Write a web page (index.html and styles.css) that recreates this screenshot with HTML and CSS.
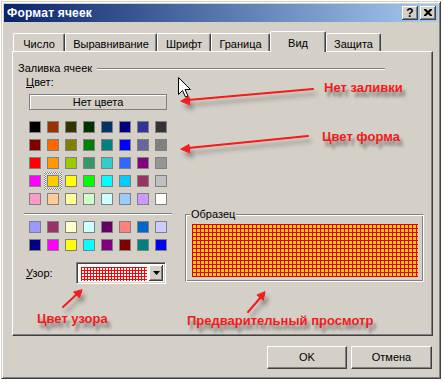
FILE: index.html
```html
<!DOCTYPE html>
<html lang="ru">
<head>
<meta charset="utf-8">
<title>Формат ячеек</title>
<link rel="stylesheet" href="styles.css">
</head>
<body>
<div class="stage">
  <div class="dialog">
    <div class="titlebar">
      <span class="title">Формат ячеек</span>
      <span class="tbtn help">?</span>
      <span class="tbtn close">
        <svg width="8" height="7" viewBox="0 0 8 7"><path d="M0 0h2l2 2 2-2h2v1L5.5 3.5 8 6v1H6L4 5 2 7H0V6l2.5-2.5L0 1z" fill="#000"/></svg>
      </span>
    </div>
    <div class="client">
      <div class="tabs">
        <div class="tab w1">Число</div>
        <div class="tab w2">Выравнивание</div>
        <div class="tab w3">Шрифт</div>
        <div class="tab w4">Граница</div>
        <div class="tab w5 active">Вид</div>
        <div class="tab w6">Защита</div>
      </div>
      <div class="panel">
        <div class="grouphead"><span class="gtext">Заливка ячеек</span><span class="etch grow"></span></div>
        <div class="panel-body">
          <div class="leftcol">
            <div class="lbl"><u>Ц</u>вет:</div>
            <div class="nocolor">Нет цвета</div>
            <div class="swatches">
              <span class="sw" style="background:#000000"></span><span class="sw" style="background:#993300"></span><span class="sw" style="background:#333300"></span><span class="sw" style="background:#003300"></span><span class="sw" style="background:#003366"></span><span class="sw" style="background:#000080"></span><span class="sw" style="background:#333399"></span><span class="sw" style="background:#333333"></span>
              <span class="sw" style="background:#800000"></span><span class="sw" style="background:#FF6600"></span><span class="sw" style="background:#808000"></span><span class="sw" style="background:#008000"></span><span class="sw" style="background:#008080"></span><span class="sw" style="background:#0000FF"></span><span class="sw" style="background:#666699"></span><span class="sw" style="background:#808080"></span>
              <span class="sw" style="background:#FF0000"></span><span class="sw" style="background:#FF9900"></span><span class="sw" style="background:#99CC00"></span><span class="sw" style="background:#339966"></span><span class="sw" style="background:#33CCCC"></span><span class="sw" style="background:#3366FF"></span><span class="sw" style="background:#800080"></span><span class="sw" style="background:#969696"></span>
              <span class="sw" style="background:#FF00FF"></span><span class="sw selected" style="background:#FFCC00"></span><span class="sw" style="background:#FFFF00"></span><span class="sw" style="background:#00FF00"></span><span class="sw" style="background:#00FFFF"></span><span class="sw" style="background:#00CCFF"></span><span class="sw" style="background:#993366"></span><span class="sw" style="background:#C0C0C0"></span>
              <span class="sw" style="background:#FF99CC"></span><span class="sw" style="background:#FFCC99"></span><span class="sw" style="background:#FFFF99"></span><span class="sw" style="background:#CCFFCC"></span><span class="sw" style="background:#CCFFFF"></span><span class="sw" style="background:#99CCFF"></span><span class="sw" style="background:#CC99FF"></span><span class="sw" style="background:#FFFFFF"></span>
            </div>
            <div class="etch sep"></div>
            <div class="swatches second">
              <span class="sw" style="background:#9999FF"></span><span class="sw" style="background:#993366"></span><span class="sw" style="background:#FFFFCC"></span><span class="sw" style="background:#CCFFFF"></span><span class="sw" style="background:#660066"></span><span class="sw" style="background:#FF8080"></span><span class="sw" style="background:#0066CC"></span><span class="sw" style="background:#CCCCFF"></span>
              <span class="sw" style="background:#000080"></span><span class="sw" style="background:#FF00FF"></span><span class="sw" style="background:#FFFF00"></span><span class="sw" style="background:#00FFFF"></span><span class="sw" style="background:#800080"></span><span class="sw" style="background:#800000"></span><span class="sw" style="background:#008080"></span><span class="sw" style="background:#0000FF"></span>
            </div>
            <div class="pattern-row">
              <span class="lbl plabel"><u>У</u>зор:</span>
              <div class="combo">
                <div class="combo-field"><span class="combo-pattern"></span></div>
                <span class="combo-btn"><svg width="7" height="4" viewBox="0 0 7 4"><path d="M0 0h7L3.5 4z" fill="#000"/></svg></span>
              </div>
            </div>
          </div>
          <div class="sample">
            <span class="legend">Образец</span>
            <div class="preview"></div>
          </div>
        </div>
      </div>
      <div class="buttons">
        <div class="btn">OK</div>
        <div class="btn">Отмена</div>
      </div>
    </div>
  </div>

  <svg class="arrows" width="445" height="382" viewBox="0 0 445 382">
    <defs>
      <filter id="shadow" x="-20%" y="-50%" width="140%" height="200%">
        <feDropShadow dx="3" dy="5" stdDeviation="2" flood-color="#303030" flood-opacity="0.45"/>
      </filter>
    </defs>
    <g filter="url(#shadow)" stroke="#f51a1a" stroke-width="2" fill="#f51a1a" stroke-linecap="round">
      <line x1="313" y1="89" x2="188" y2="100"/>
      <path d="M181 101 L189 96.5 L189.8 104.5 Z" stroke-width="1"/>
      <line x1="308" y1="136" x2="188" y2="148"/>
      <path d="M181 149 L189 144.5 L189.8 152.5 Z" stroke-width="1"/>
      <line x1="63" y1="307" x2="77" y2="294"/>
      <path d="M82 290 L79.5 298 L73.8 292.2 Z" stroke-width="1"/>
      <line x1="248" y1="312" x2="261" y2="297"/>
      <path d="M265 292 L263.3 300.3 L257.2 295.2 Z" stroke-width="1"/>
    </g>
  </svg>
  <span class="note n1">Нет заливки</span>
  <span class="note n2">Цвет форма</span>
  <span class="note n3">Цвет узора</span>
  <span class="note n4">Предварительный просмотр</span>
  <svg class="cursor" width="13" height="21" viewBox="0 0 13 21"><path d="M0.5 0.5V17.5L4.5 13.5L7.5 20L10 19L7 12.5H12.5Z" fill="#fff" stroke="#000" stroke-width="1" stroke-linejoin="miter"/></svg>
</div>
</body>
</html>
```

FILE: styles.css
```css
* { box-sizing: border-box; }
html, body { margin: 0; padding: 0; }
body {
  width: 445px;
  height: 382px;
  overflow: hidden;
  background: #fff;
  font-family: "Liberation Sans", Arial, sans-serif;
  font-size: 11px;
  color: #000;
}
.stage {
  position: relative;
  width: 445px;
  height: 382px;
  padding: 1px 0 0 1px;
}
.dialog {
  width: 440px;
  height: 378px;
  background: #d4d0c8;
  border: 1px solid;
  border-color: #d4d0c8 #404040 #404040 #d4d0c8;
  box-shadow: inset 1px 1px #fff, inset -1px -1px #808080;
  padding: 2px;
  display: flex;
  flex-direction: column;
}
.titlebar {
  height: 18px;
  flex: none;
  background: linear-gradient(to right, #0a246a, #a6caf0);
  display: flex;
  align-items: center;
  padding: 0 2px 0 3px;
}
.title {
  flex: 1;
  color: #fff;
  font-weight: bold;
  font-size: 12px;
  letter-spacing: 0.2px;
  line-height: 14px;
}
.tbtn {
  width: 16px;
  height: 14px;
  background: #d4d0c8;
  box-shadow: inset -1px -1px #404040, inset 1px 1px #fff, inset -2px -2px #808080;
  display: flex;
  align-items: center;
  justify-content: center;
  font-weight: bold;
  font-size: 12px;
  line-height: 14px;
}
.tbtn + .tbtn { margin-left: 2px; }
.close svg { display: block; margin-top: -1px; }
.client {
  flex: 1;
  display: flex;
  flex-direction: column;
  padding: 8px 5px 0 8px;
  margin-top: 1px;
}
.tabs {
  display: flex;
  align-items: flex-end;
  height: 21px;
  padding-left: 1px;
  margin-bottom: -1px;
  position: relative;
  z-index: 1;
}
.tab {
  height: 18px;
  margin-bottom: 1px;
  border-top: 1px solid #fff;
  border-left: 1px solid #fff;
  border-right: 1px solid #404040;
  border-radius: 2px 2px 0 0;
  box-shadow: inset -1px 0 #808080;
  background: #d4d0c8;
  text-align: center;
  padding-top: 3px;
  line-height: 14px;
  white-space: nowrap;
}
.tab.active {
  height: 21px;
  margin-bottom: 0;
  padding-top: 4px;
}
.w1 { width: 52px; }
.w2 { width: 92px; }
.w3 { width: 54px; }
.w4 { width: 59px; }
.w5 { width: 56px; }
.w6 { width: 55px; }
.panel {
  width: 421px;
  height: 285px;
  flex: none;
  border-top: 1px solid #fff;
  border-left: 1px solid #fff;
  border-right: 1px solid #404040;
  border-bottom: 1px solid #404040;
  box-shadow: inset -1px -1px #808080;
  padding: 9px 0 0 5px;
}
.grouphead {
  display: flex;
  align-items: center;
  width: 367px;
  height: 14px;
}
.gtext { line-height: 14px; margin-right: 5px; }
.etch {
  display: block;
  height: 2px;
  border-top: 1px solid #808080;
  border-bottom: 1px solid #fff;
}
.grow { flex: 1; margin-top: 1px; }
.panel-body {
  display: flex;
  margin-left: 6px;
}
.leftcol {
  width: 148px;
  display: flex;
  flex-direction: column;
}
.lbl {
  padding-left: 2px;
  line-height: 14px;
}
.nocolor {
  margin: 5px 0 0 5px;
  width: 138px;
  height: 16px;
  border: 1px solid #808080;
  box-shadow: inset 1px 1px #fff;
  text-align: center;
  line-height: 14px;
}
.swatches {
  position: relative;
  z-index: 0;
  margin-top: 11px;
  padding-left: 5px;
  display: grid;
  grid-template-columns: repeat(8, 12px);
  grid-auto-rows: 12px;
  gap: 6px;
}
.swatches.second { margin-top: 6px; }
.sw {
  display: block;
  width: 12px;
  height: 12px;
  border: 1px solid #808080;
  position: relative;
}
.sw.selected::before {
  content: "";
  position: absolute;
  left: -4px;
  top: -4px;
  width: 18px;
  height: 18px;
  background: repeating-conic-gradient(#808080 0 25%, #fff 0 50%) 0 0 / 2px 2px;
  z-index: -1;
}
.sw.selected::after {
  content: "";
  position: absolute;
  left: -2px;
  top: -2px;
  width: 14px;
  height: 14px;
  background: #d4d0c8;
  z-index: -1;
}
.sep { margin-top: 8px; width: 148px; }
.pattern-row {
  margin-top: 11px;
  display: flex;
  align-items: center;
  height: 22px;
}
.plabel { width: 52px; }
.combo {
  width: 90px;
  height: 22px;
  border: 1px solid;
  border-color: #808080 #fff #fff #808080;
  box-shadow: inset 1px 1px #404040, inset -1px -1px #d4d0c8;
  padding: 2px;
  background: #fff;
  display: flex;
}
.combo-field {
  flex: 1;
  padding: 2px;
}
.combo-pattern {
  display: block;
  width: 66px;
  height: 14px;
  background-color: #fff;
  background-image:
    repeating-linear-gradient(to right, #ff0000 0 1px, rgba(255, 0, 0, 0) 1px 3px),
    repeating-linear-gradient(to bottom, #ff0000 0 1px, rgba(255, 0, 0, 0) 1px 3px);
}
.combo-btn {
  width: 16px;
  height: 16px;
  background: #d4d0c8;
  box-shadow: inset -1px -1px #404040, inset 1px 1px #fff, inset -2px -2px #808080;
  display: flex;
  align-items: center;
  justify-content: center;
}
.combo-btn svg { display: block; }
.sample {
  position: relative;
  align-self: flex-end;
  margin: 0 0 2px 13px;
  width: 239px;
  height: 68px;
  border: 1px solid;
  border-color: #808080 #fff #fff #808080;
  box-shadow: inset 1px 1px #fff, inset -1px -1px #808080;
  padding: 9px 0 0 6px;
}
.legend {
  position: absolute;
  left: 4px;
  top: -8px;
  padding: 0 1px;
  background: #d4d0c8;
  line-height: 14px;
}
.preview {
  width: 226px;
  height: 53px;
  background-color: #ffcc00;
  background-image:
    repeating-linear-gradient(to right, #e00000 0 1px, rgba(224, 0, 0, 0) 1px 4px),
    repeating-linear-gradient(to bottom, #e00000 0 1px, rgba(224, 0, 0, 0) 1px 4px);
}
.buttons {
  margin-top: 10px;
  margin-right: 1px;
  display: flex;
  justify-content: flex-end;
  gap: 4px;
}
.btn {
  width: 80px;
  height: 23px;
  border: 1px solid;
  border-color: #fff #404040 #404040 #fff;
  box-shadow: inset -1px -1px #808080;
  text-align: center;
  line-height: 21px;
}
.btn + .btn { width: 81px; }
.arrows {
  position: absolute;
  left: 0;
  top: 0;
  pointer-events: none;
}
.note {
  position: absolute;
  font-family: "Liberation Sans", Arial, sans-serif;
  font-weight: bold;
  font-size: 13px;
  line-height: 16px;
  color: #f51a1a;
  white-space: nowrap;
  text-shadow: 3px 5px 3px rgba(40, 40, 40, 0.45);
}
.n1 { left: 324px; top: 80px; }
.n2 { left: 322px; top: 129px; }
.n3 { left: 37px; top: 311px; }
.n4 { left: 187px; top: 313px; }
.cursor {
  position: absolute;
  left: 178px;
  top: 77px;
}
```
